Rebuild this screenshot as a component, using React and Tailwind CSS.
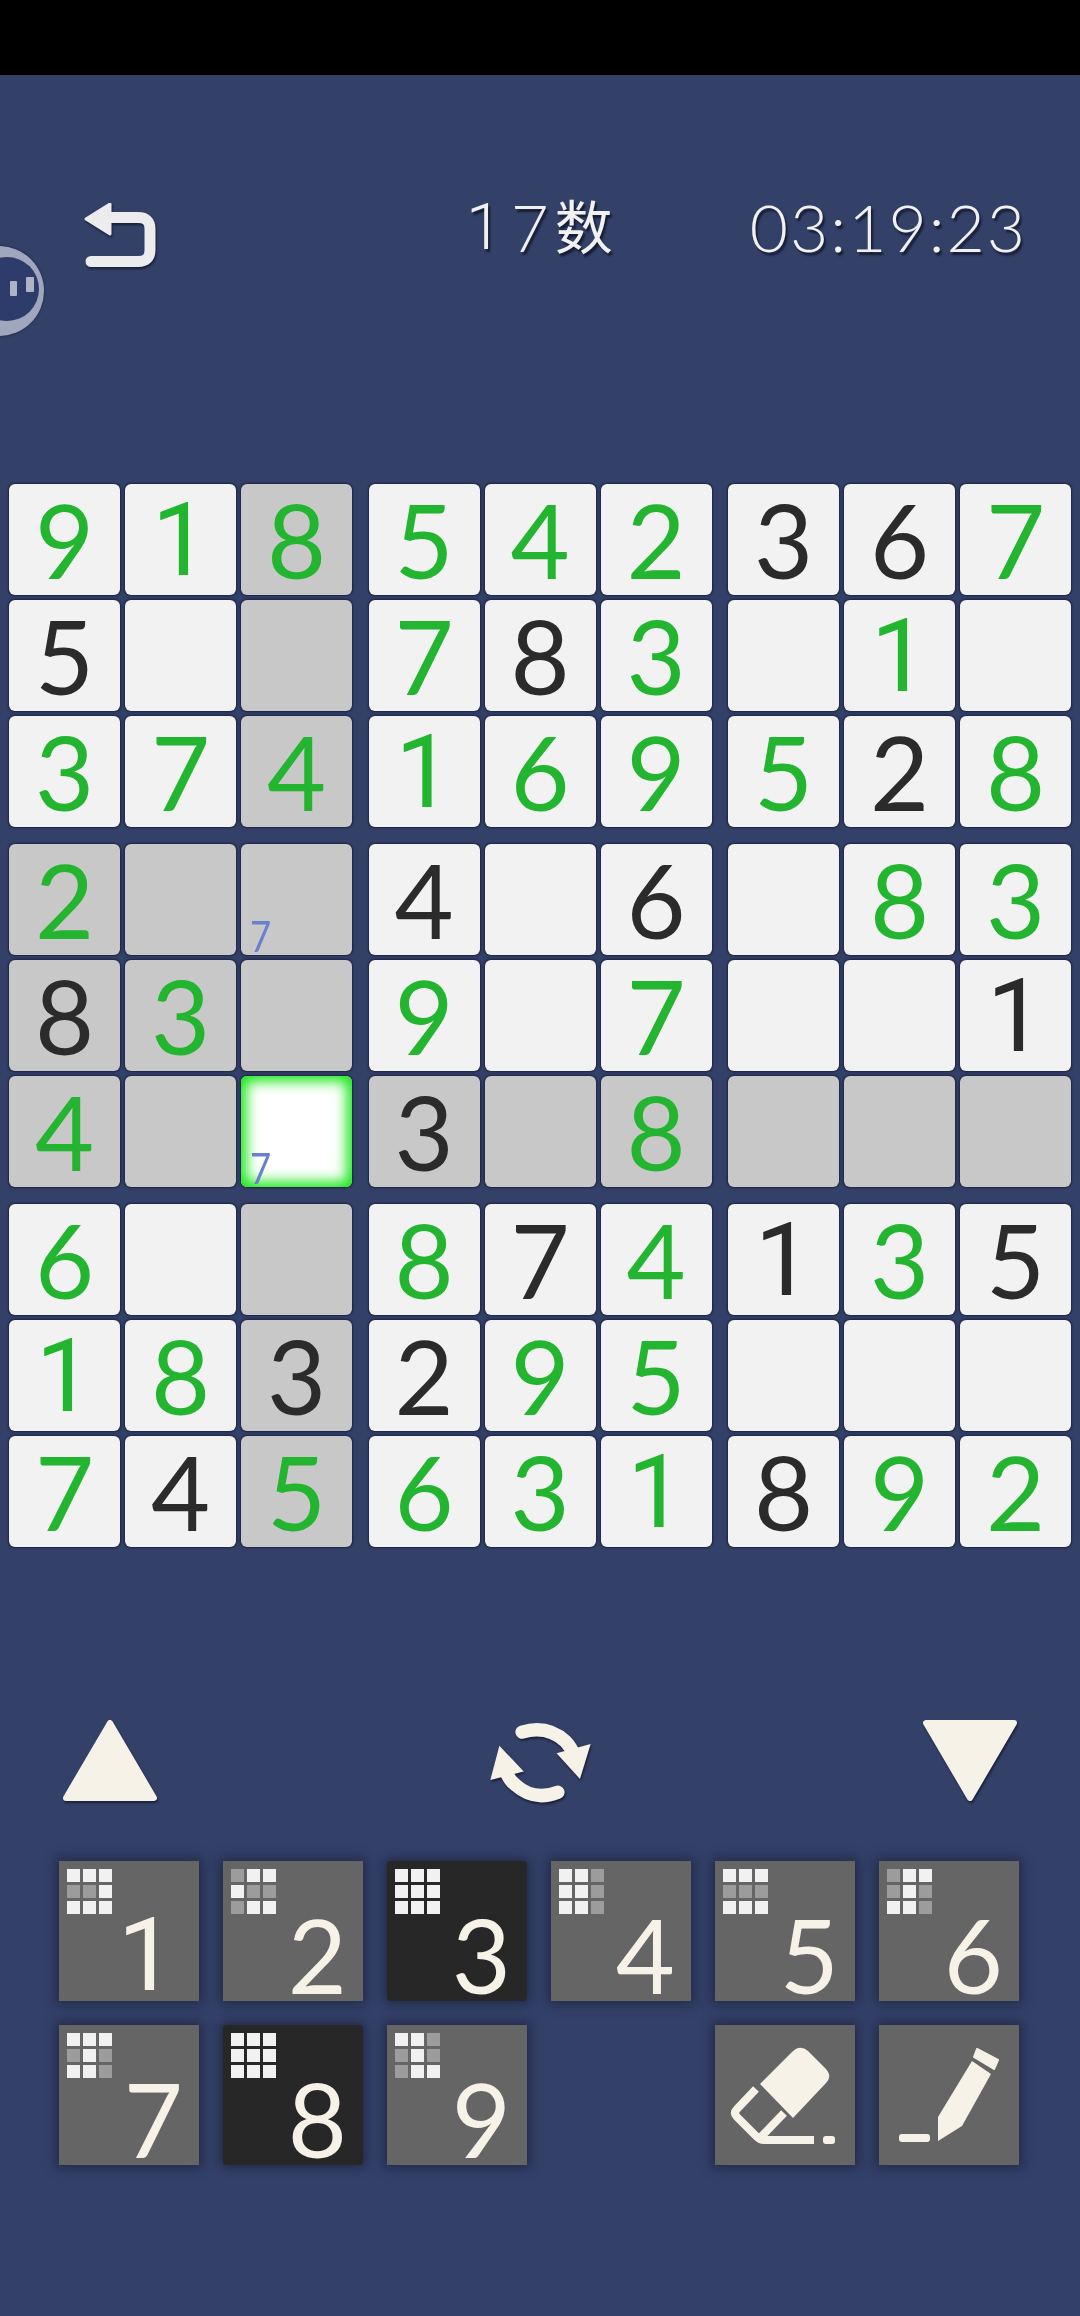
import React from "react";

const FONT = { fontFamily: '"Lato", "Noto Sans CJK SC", sans-serif' };
const ONE = { fontFamily: '"Roboto", sans-serif' };

const G = (v) => ({ v, c: "g" });
const B = (v) => ({ v, c: "b" });
const E = { v: "", c: "" };
const rows = [
  [G(9), G(1), G(8), G(5), G(4), G(2), B(3), B(6), G(7)],
  [B(5), E, E, G(7), B(8), G(3), E, G(1), E],
  [G(3), G(7), G(4), G(1), G(6), G(9), G(5), B(2), G(8)],
  [G(2), E, { v: "", c: "", note: 7 }, B(4), E, B(6), E, G(8), G(3)],
  [B(8), G(3), E, G(9), E, G(7), E, E, B(1)],
  [G(4), E, { v: "", c: "", note: 7, sel: true }, B(3), E, G(8), E, E, E],
  [G(6), E, E, G(8), B(7), G(4), B(1), G(3), B(5)],
  [G(1), G(8), B(3), B(2), G(9), G(5), E, E, E],
  [G(7), B(4), G(5), G(6), G(3), G(1), B(8), G(9), G(2)],
];

function Note({ n }) {
  return (
    <span className="absolute left-[9px] bottom-[-6px] origin-left scale-x-[0.85] text-[43px] leading-[50px] text-[#6a80cf]" style={FONT}>{n}</span>
  );
}

function Cell({ cell, shaded }) {
  if (cell.sel) {
    return (
      <div className="relative w-[111px] h-[111px] rounded-[6px] bg-white shadow-[inset_0_0_14px_5px_#0ee60e,0_0_2px_1px_#1b2240]">
        <Note n={cell.note} />
      </div>
    );
  }
  return (
    <div className={`relative flex items-center justify-center w-[111px] h-[111px] rounded-[6px] shadow-[0_0_2px_1px_#1b2240] ${shaded ? "bg-[#c8c8c8]" : "bg-[#f2f2f2]"}`}>
      <span className={`text-[102px] leading-[110px] ${cell.c === "g" ? "text-[#24b530]" : "text-[#2b2b2b]"}`} style={cell.v === 1 ? ONE : FONT}>{cell.v}</span>
      {cell.note && <Note n={cell.note} />}
    </div>
  );
}

function Board() {
  const blocks = [0, 3, 6];
  return (
    <div className="flex flex-col gap-[17px] pl-[9px]">
      {blocks.map((br) => (
        <div key={br} className="flex gap-[16.5px]">
          {blocks.map((bc) => (
            <div key={bc} className="grid grid-cols-[111px_111px_111px] gap-[5px]">
              {[0, 1, 2].flatMap((r) =>
                [0, 1, 2].map((c) => {
                  const ri = br + r;
                  const ci = bc + c;
                  const shaded = ri === 5 || ci === 2 || (ri >= 3 && ri <= 5 && ci <= 2);
                  return <Cell key={ci} cell={rows[ri][ci]} shaded={shaded} />;
                })
              )}
            </div>
          ))}
        </div>
      ))}
    </div>
  );
}

const pads = {
  1: "111001111",
  2: "011100011",
  3: "111111111",
  4: "110110110",
  5: "111000111",
  6: "011010110",
  7: "111010110",
  8: "111111111",
  9: "110010011",
};

function NumKey({ n }) {
  const dark = n === 3 || n === 8;
  return (
    <div className={`relative w-[140px] h-[140px] shadow-[0_0_10px_3px_rgba(20,26,50,0.55)] ${dark ? "bg-[#272727] rounded-[4px]" : "bg-[#656565]"}`}>
      <div className="absolute left-[8px] top-[8px] grid grid-cols-[12.5px_12.5px_12.5px] gap-[3.5px]">
        {pads[n].split("").map((p, i) => (
          <div key={i} className={`h-[12.5px] ${p === "1" ? "bg-[#f1f1f1]" : "bg-[#9c9c9c]"}`} />
        ))}
      </div>
      <span className={`absolute bottom-[-9px] text-[102px] leading-[110px] text-[#f6f2e8] ${n === 1 ? "right-[24px]" : "right-[16px]"}`} style={n === 1 ? ONE : FONT}>{n}</span>
    </div>
  );
}

function IconKey({ children }) {
  return (
    <div className="w-[140px] h-[140px] bg-[#656565] shadow-[0_0_10px_3px_rgba(20,26,50,0.55)]">
      {children}
    </div>
  );
}

function Eraser() {
  return (
    <svg width="140" height="140" viewBox="0 0 140 140" fill="#f6f2e8">
      <path d="M45 59 L77 27 Q85 19 93 26 L110 43 Q118 51 111 58 L78 93 Z" />
      <path d="M41 64 L22 84 Q18 88 22 92 L42 112 Q45 115 49 115 L99 115" fill="none" stroke="#f6f2e8" strokeWidth="8" strokeLinejoin="round" />
      <path d="M45 113 L69 88" fill="none" stroke="#f6f2e8" strokeWidth="8" />
      <rect x="108" y="111" width="12" height="8" rx="3" />
    </svg>
  );
}

function Pencil() {
  return (
    <svg width="140" height="140" viewBox="0 0 140 140" fill="#f6f2e8">
      <rect x="20" y="109" width="31" height="8" rx="3" />
      <path d="M59 116 L59 92 L93 36 L112 49 L83 101 Z" />
      <path d="M98 24 L119 35 L115 44 L95 32 Z" stroke="#f6f2e8" strokeWidth="2" strokeLinejoin="round" />
    </svg>
  );
}

const shadow = { filter: "drop-shadow(1px 2px 1px rgba(15,20,40,0.75))" };

function Refresh() {
  return (
    <svg width="107" height="87" viewBox="50 50 320 260" fill="none" style={shadow}>
      <path d="M155 92 Q230 70 285 120 Q300 135 310 160" stroke="#f6f2e8" strokeWidth="40" strokeLinecap="round" />
      <path d="M258 155 L360 128 L328 232 Z" fill="#f6f2e8" />
      <path d="M262 272 Q190 300 135 250 Q115 235 105 205" stroke="#f6f2e8" strokeWidth="40" strokeLinecap="round" />
      <path d="M87 133 L160 210 L60 235 Z" fill="#f6f2e8" />
    </svg>
  );
}

export default function App() {
  return (
    <div className="relative w-[1080px] h-[2316px] overflow-hidden bg-[#334068]" style={FONT}>
      <div className="h-[75px] bg-black" />

      {/* floating assistant */}
      <div className="absolute left-[-46px] top-[246px] w-[90px] h-[90px] rounded-full bg-[#a0a6bb] shadow-[0_0_2px_1px_rgba(30,40,80,0.5)]">
        <div className="absolute left-[21px] top-[11px] w-[64px] h-[64px] rounded-full bg-[#2e3c6c]" />
        <span className="absolute left-[56px] top-[35px] w-[7px] h-[15px] rounded-[1px] bg-[#aeb3c6]" />
        <span className="absolute left-[72px] top-[31px] w-[8px] h-[15px] rounded-[1px] bg-[#aeb3c6]" />
      </div>

      {/* header */}
      <div className="flex items-start h-[409px] pt-[128px]">
        <svg className="ml-[84px] w-[74px] h-[66px]" viewBox="0 0 74 66" fill="none" style={shadow}>
          <path d="M2 16 L26 1 L26 31 Z" fill="#ececee" stroke="#ececee" strokeWidth="3" strokeLinejoin="round" />
          <path d="M20 14.5 L54 14.5 Q66 14.5 66 26 L66 47 Q66 58.5 54 58.5 L7 58.5" stroke="#ececee" strokeWidth="11" strokeLinecap="round" />
        </svg>
        <div className="ml-[308px] mt-[-8px] flex items-center h-[64px] text-[65px] font-light leading-none tracking-[9px] text-[#f1f1f1] [text-shadow:2px_3px_2px_rgba(15,20,40,0.8)]">
          <span style={ONE}>1</span>
          <span>7</span>
          <span className="ml-[-3px] text-[58px] font-normal tracking-normal">数</span>
        </div>
        <div className="ml-[137px] mt-[-8px] flex items-center h-[64px] text-[66px] font-light leading-none tracking-[2px] text-[#f1f1f1] [text-shadow:2px_3px_2px_rgba(15,20,40,0.8)]">
          <span>03:19:23</span>
        </div>
      </div>

      <Board />

      {/* arrows */}
      <div className="flex items-center justify-between mt-[171px] pl-[62px] pr-[62px] h-[86px]">
        <svg width="96" height="86" viewBox="0 0 96 86" style={shadow}>
          <path d="M48 5 L92 80 L4 80 Z" fill="#f6f2e8" stroke="#f6f2e8" strokeWidth="6" strokeLinejoin="round" />
        </svg>
        <Refresh />
        <svg width="96" height="86" viewBox="0 0 96 86" style={shadow}>
          <path d="M4 5 L92 5 L48 80 Z" fill="#f6f2e8" stroke="#f6f2e8" strokeWidth="6" strokeLinejoin="round" />
        </svg>
      </div>

      {/* keypad */}
      <div className="grid grid-cols-[140px_140px_140px_140px_140px_140px] gap-[24px] mt-[57px] pl-[59px]">
        {[1, 2, 3, 4, 5, 6, 7, 8, 9].map((n) => (
          <NumKey key={n} n={n} />
        ))}
        <div />
        <IconKey><Eraser /></IconKey>
        <IconKey><Pencil /></IconKey>
      </div>
    </div>
  );
}
